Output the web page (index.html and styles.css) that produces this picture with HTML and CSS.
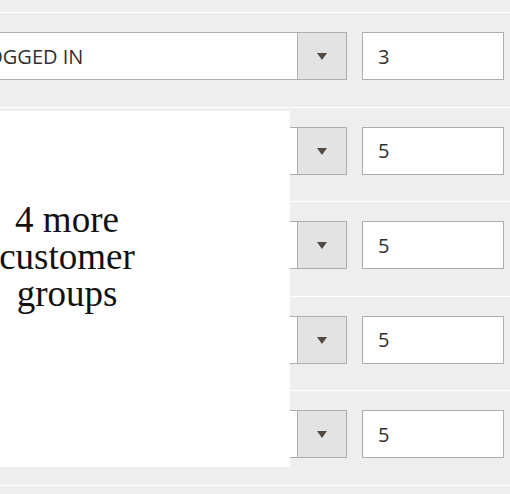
FILE: index.html
```html
<!DOCTYPE html>
<html>
<head>
<meta charset="utf-8">
<link rel="stylesheet" href="styles.css">
</head>
<body>
<div class="page">
  <div class="row">
    <div class="select"><span class="select-text">NOT LOGGED IN</span><span class="select-btn"><span class="arrow"></span></span></div>
    <div class="input">3</div>
  </div>
  <div class="row">
    <div class="select"><span class="select-text">GENERAL</span><span class="select-btn"><span class="arrow"></span></span></div>
    <div class="input">5</div>
  </div>
  <div class="row">
    <div class="select"><span class="select-text">WHOLESALE</span><span class="select-btn"><span class="arrow"></span></span></div>
    <div class="input">5</div>
  </div>
  <div class="row">
    <div class="select"><span class="select-text">RETAILER</span><span class="select-btn"><span class="arrow"></span></span></div>
    <div class="input">5</div>
  </div>
  <div class="row">
    <div class="select"><span class="select-text">VIP</span><span class="select-btn"><span class="arrow"></span></span></div>
    <div class="input">5</div>
  </div>
  <div class="row row-last"></div>
  <div class="overlay">4 more<br>customer<br>groups</div>
</div>
</body>
</html>
```

FILE: styles.css
```css
html, body {
  margin: 0;
  padding: 0;
}
body {
  background: #eeeeee;
  overflow: hidden;
  width: 510px;
  height: 494px;
}
.page {
  position: relative;
  margin-left: -156px;
  width: 666px;
  padding-top: 12px;
  font-family: "Open Sans", "Liberation Sans", sans-serif;
}
.row {
  box-sizing: border-box;
  height: 94.5px;
  border-top: 1px solid #ffffff;
  padding: 19px 6px 0 71px;
  display: flex;
  gap: 15px;
}
.row-last {
  height: 20px;
}
.select {
  flex: 1;
  height: 48px;
  box-sizing: border-box;
  border: 1px solid #adadad;
  background: #ffffff;
  display: flex;
  align-items: center;
}
.select-text {
  flex: 1;
  padding-left: 14px;
  font-size: 20px;
  color: #303030;
  white-space: nowrap;
  overflow: hidden;
}
.select-btn {
  width: 49px;
  height: 100%;
  box-sizing: border-box;
  border-left: 1px solid #adadad;
  background: #e3e3e3;
  display: flex;
  align-items: center;
  justify-content: center;
}
.arrow {
  width: 0;
  height: 0;
  border-left: 5.5px solid transparent;
  border-right: 5.5px solid transparent;
  border-top: 7px solid #514943;
  margin-top: 1px;
}
.input {
  width: 142px;
  height: 48px;
  box-sizing: border-box;
  border: 1px solid #adadad;
  background: #ffffff;
  padding-left: 15px;
  font-size: 20px;
  color: #303030;
  display: flex;
  align-items: center;
}
.overlay {
  position: absolute;
  left: 0;
  top: 111px;
  width: 446px;
  height: 356px;
  box-sizing: border-box;
  padding-top: 90px;
  background: #ffffff;
  text-align: center;
  font-family: "Liberation Serif", "Times New Roman", serif;
  font-size: 37px;
  line-height: 37px;
  color: #111111;
}
```
